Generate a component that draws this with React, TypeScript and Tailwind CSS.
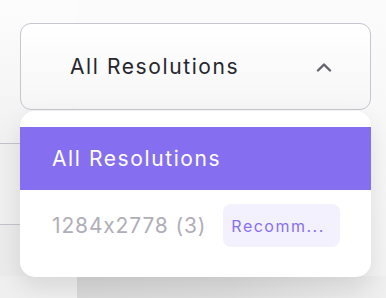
import React, { useState } from 'react';

const ChevronUp = () => (
  <svg width="16" height="10" viewBox="0 0 16 10" fill="none">
    <path d="M2 8.5L8 2.5L14 8.5" stroke="#64636e" strokeWidth="2.4" strokeLinecap="round" strokeLinejoin="round" />
  </svg>
);

export default function App() {
  const [open] = useState(true);
  const font = { fontFamily: 'Inter, "Noto Sans", sans-serif' };

  return (
    <div className="relative w-[386px] h-[298px] overflow-hidden bg-[#f2f2f2]" style={font}>
      {/* page behind the menu */}
      <div className="flex h-full">
        <div className="flex flex-col w-[77px]">
          <div className="h-[144px] bg-gradient-to-b from-[#fdfdfd] to-[#f1f1f1] border-b border-[#c3c3cb]" />
          <div className="h-[81px] bg-[#efefef] border-b border-[#c3c3cb]" />
          <div className="h-[51px] bg-[#ebebeb]" />
          <div className="flex-1 bg-[#efefef]" />
        </div>
        <div className="flex flex-col flex-1">
          <div className="h-[276px] bg-gradient-to-b from-[#fbfbfb] to-[#f3f3f3]" />
          <div className="flex-1 bg-gradient-to-r from-[#d9d9d9] via-[#dedede] to-[#efefef]" />
        </div>
      </div>

      {/* select */}
      <div className="absolute left-[20px] top-[23px] w-[351px]">
        <button className="flex items-center justify-between w-full h-[87px] pl-[49px] pr-[38px] rounded-[11px] border-[1.5px] border-[#c6c5d0] bg-gradient-to-b from-white to-[#f6f6f6] text-[21px] text-[#26262e] tracking-[1.6px]">
          <span>All Resolutions</span>
          <ChevronUp />
        </button>

        {open && (
          <div className="mt-[1px] pt-[16px] h-[166px] rounded-[15px] bg-white shadow-[0_10px_24px_rgba(0,0,0,0.10)] overflow-hidden">
            <div className="flex items-center h-[63px] pl-[32px] bg-[#856ff0] text-[21px] text-white tracking-[1.6px]">
              All Resolutions
            </div>
            <div className="flex items-center gap-[17px] pl-[32px] pt-[14px]">
              <span className="text-[21px] text-[#b0aeb8] tracking-[0.85px]">1284x2778 (3)</span>
              <span className="flex items-center h-[43px] w-[117px] pl-[8px] rounded-[8px] bg-[#f4f1fe] text-[16px] text-[#8670ee] tracking-[1.5px]">
                Recomm...
              </span>
            </div>
          </div>
        )}
      </div>
    </div>
  );
}
